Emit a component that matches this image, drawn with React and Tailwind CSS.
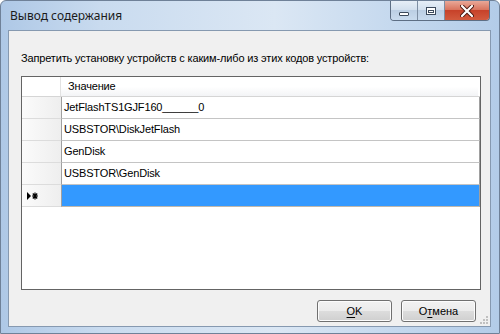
import React from "react";

const rows = [
  "JetFlashTS1GJF160______0",
  "USBSTOR\\DiskJetFlash",
  "GenDisk",
  "USBSTOR\\GenDisk",
];

function CaptionButtons() {
  return (
    <div className="absolute top-0 right-[9px] flex h-[20px] rounded-b-[4px] border border-t-0 border-[#5d6e84] overflow-hidden">
      <div className="w-[27px] h-full flex items-center justify-center bg-[linear-gradient(to_bottom,#e6eef7_0%,#d3e0ee_45%,#bccfe4_50%,#c9dbee_100%)] border-r border-[#7d8ea3]">
        <div className="w-[10px] h-[4px] mt-[6px] bg-white border border-[#3c4a5c] rounded-[1px]" />
      </div>
      <div className="w-[27px] h-full flex items-center justify-center bg-[linear-gradient(to_bottom,#e6eef7_0%,#d3e0ee_45%,#bccfe4_50%,#c9dbee_100%)] border-r border-[#7d8ea3]">
        <div className="w-[10px] h-[8px] border border-[#3c4a5c] bg-white flex items-center justify-center">
          <div className="w-[6px] h-[3px] border border-[#3c4a5c] mt-[1px]" />
        </div>
      </div>
      <div className="w-[44px] h-full flex items-center justify-center bg-[linear-gradient(to_bottom,#e9a898_0%,#d9755f_45%,#c7422a_50%,#d25a3e_100%)]">
        <svg width="14" height="12" viewBox="0 0 14 12">
          <path d="M2 1 L12 11 M12 1 L2 11" stroke="#4a1a12" strokeWidth="4" strokeLinecap="round" />
          <path d="M2 1 L12 11 M12 1 L2 11" stroke="#ffffff" strokeWidth="2.2" strokeLinecap="round" />
        </svg>
      </div>
    </div>
  );
}

function WinButton({ children }) {
  return (
    <button className="w-[75px] h-[22px] rounded-[3px] border border-[#707070] bg-[linear-gradient(to_bottom,#f2f2f2_0%,#ebebeb_50%,#dddddd_50%,#cfcfcf_100%)] shadow-[inset_0_0_0_1px_#fcfcfc] text-[11px] text-black leading-none flex items-center justify-center">
      {children}
    </button>
  );
}

export default function App() {
  return (
    <div
      className="w-[500px] h-[334px] relative flex flex-col rounded-t-[6px] border border-[#6f8198] bg-[linear-gradient(to_right,#aec8e6_0%,#c9dbef_20%,#dbe7f4_55%,#c4d8ee_80%,#b3cce8_100%)]"
      style={{ fontFamily: '"Liberation Sans", Arial, sans-serif' }}
    >
      <div className="h-[29px] shrink-0 flex items-center pl-[9px]">
        <span
          className="text-[12px] text-[#1b1b1b] mt-[1px]"
          style={{ fontFamily: '"Noto Sans", "Open Sans", sans-serif' }}
        >
          Вывод содержания
        </span>
      </div>
      <CaptionButtons />

      <div className="flex-1 ml-[7px] mr-[8px] mb-[6px] border border-[#8699b0] bg-[#f0f0f0] relative flex flex-col pl-[12px] pr-[11px] pt-[20px]">
        <div className="h-[14px] leading-[14px] text-[11px] tracking-[-0.15px] text-black">
          Запретить установку устройств с каким-либо из этих кодов устройств:
        </div>

        <div className="mt-[11px] w-[460px] h-[214px] border border-[#646464] bg-white flex flex-col text-[11px] tracking-[-0.15px] text-black">
          <div className="h-[20px] flex border-b border-[#d5d5d5]">
            <div className="w-[39px] bg-white border-r border-[#e2e2e2]" />
            <div className="flex-1 pl-[7px] flex items-center bg-[linear-gradient(to_bottom,#ffffff_0%,#ffffff_50%,#f3f4f6_100%)] mr-[2px]">
              Значение
            </div>
          </div>
          {rows.map((r) => (
            <div key={r} className="h-[22px] flex">
              <div className="w-[39px] bg-[linear-gradient(to_right,#fbfbfb,#eeeeee)] border-b border-[#dcdcdc]" />
              <div className="flex-1 flex items-center pl-[2px] border-l border-r border-b border-[#a0a0a0] border-b-[#c4c4c4]">
                {r}
              </div>
            </div>
          ))}
          <div className="h-[22px] flex">
            <div className="w-[39px] bg-[linear-gradient(to_right,#fbfbfb,#eeeeee)] border-b border-[#dcdcdc] flex items-center pl-[5px]">
              <svg width="12" height="8" viewBox="0 0 12 8">
                <path d="M0 0 L4 4 L0 8 Z" fill="#000" />
                <path d="M8 0.5 V7.5 M5 4 H11 M5.8 1.5 L10.2 6.5 M10.2 1.5 L5.8 6.5" stroke="#000" strokeWidth="1.2" />
              </svg>
            </div>
            <div className="flex-1 bg-[#3399ff] border-l border-r border-b border-[#a0a0a0] border-b-[#c0b8ac]" />
          </div>
        </div>

        <div className="mt-[10px] flex justify-end gap-[9px] mr-[3px]">
          <WinButton>
            <span className="underline underline-offset-2">O</span>K
          </WinButton>
          <WinButton>
            О<span className="underline underline-offset-2">т</span>мена
          </WinButton>
        </div>

        <svg className="absolute right-[1px] bottom-[1px]" width="10" height="10" viewBox="0 0 10 10">
          <rect x="7" y="1" width="2" height="2" fill="#c0c0c0" />
          <rect x="4" y="4" width="2" height="2" fill="#c0c0c0" />
          <rect x="7" y="4" width="2" height="2" fill="#c0c0c0" />
          <rect x="1" y="7" width="2" height="2" fill="#c0c0c0" />
          <rect x="4" y="7" width="2" height="2" fill="#c0c0c0" />
          <rect x="7" y="7" width="2" height="2" fill="#c0c0c0" />
        </svg>
      </div>
    </div>
  );
}
